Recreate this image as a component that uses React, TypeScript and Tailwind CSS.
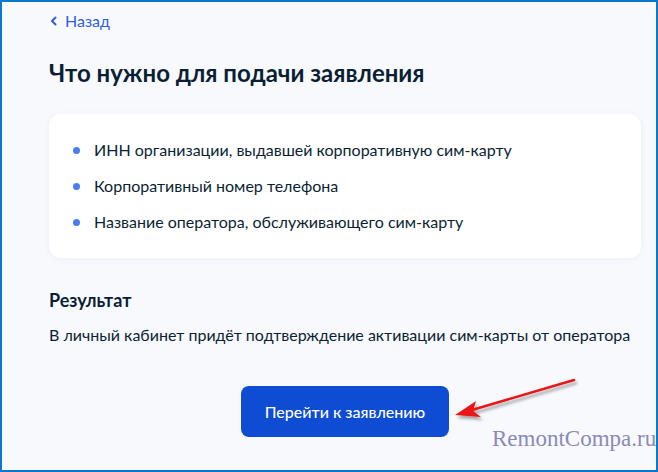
const items = [
  'ИНН организации, выдавшей корпоративную сим-карту',
  'Корпоративный номер телефона',
  'Название оператора, обслуживающего сим-карту',
]

export default function App() {
  return (
    <div className="relative w-[658px] h-[472px] overflow-hidden border-2 border-[#0a78cf] bg-[#f8f9fd] font-['Lato','Noto_Sans',sans-serif] text-[#0b1f33]">
      <div className="pl-[47px] pr-[15px] pt-[9px]">
        <a className="flex items-center gap-[6px] text-[16px] leading-[20px] text-[#2f5ddb]">
          <svg className="w-[10px] h-[10px]" viewBox="0 0 10 10" fill="none" stroke="currentColor" strokeWidth="2" strokeLinecap="round" strokeLinejoin="round">
            <path d="M6.5 1.5 3 5l3.5 3.5" />
          </svg>
          <span>Назад</span>
        </a>

        <h1 className="mt-[27px] text-[24px] leading-[30px] font-bold">Что нужно для подачи заявления</h1>

        <div className="mt-[26px] rounded-[12px] bg-white shadow-[0_1px_6px_rgba(30,60,120,0.06)] px-[24px] py-[26px]">
          <ul className="flex flex-col gap-[16px]">
            {items.map(t => (
              <li key={t} className="flex items-center gap-[14px] text-[16px] leading-[20px]">
                <span className="w-[7px] h-[7px] rounded-full bg-[#4a7cf0]" />
                {t}
              </li>
            ))}
          </ul>
        </div>

        <h2 className="mt-[31px] text-[18px] leading-[22px] font-bold">Результат</h2>
        <p className="mt-[14px] text-[16px] leading-[20px]">В личный кабинет придёт подтверждение активации сим-карты от оператора</p>

        <div className="mt-[41px] flex justify-center">
          <button className="w-[208px] h-[51px] rounded-[8px] bg-[#0d4cd3] text-white text-[16px] font-medium">
            Перейти к заявлению
          </button>
        </div>
      </div>

      <svg className="absolute left-0 top-0 w-[658px] h-[472px] pointer-events-none" viewBox="0 0 658 472">
        <defs>
          <filter id="sh" x="-20%" y="-50%" width="140%" height="200%">
            <feDropShadow dx="2" dy="3" stdDeviation="1.5" floodColor="#000" floodOpacity="0.35" />
          </filter>
        </defs>
        <g filter="url(#sh)">
          <line x1="572" y1="378" x2="470" y2="408" stroke="#e81818" strokeWidth="2.5" strokeLinecap="round" />
          <path d="M453 413 474 399 471 409 479 415Z" fill="#e81818" />
        </g>
      </svg>

      <span className="absolute left-[490px] top-[420px] font-['Liberation_Serif',serif] text-[23px] text-[#8a8ab8]">RemontCompa.ru</span>
    </div>
  )
}
